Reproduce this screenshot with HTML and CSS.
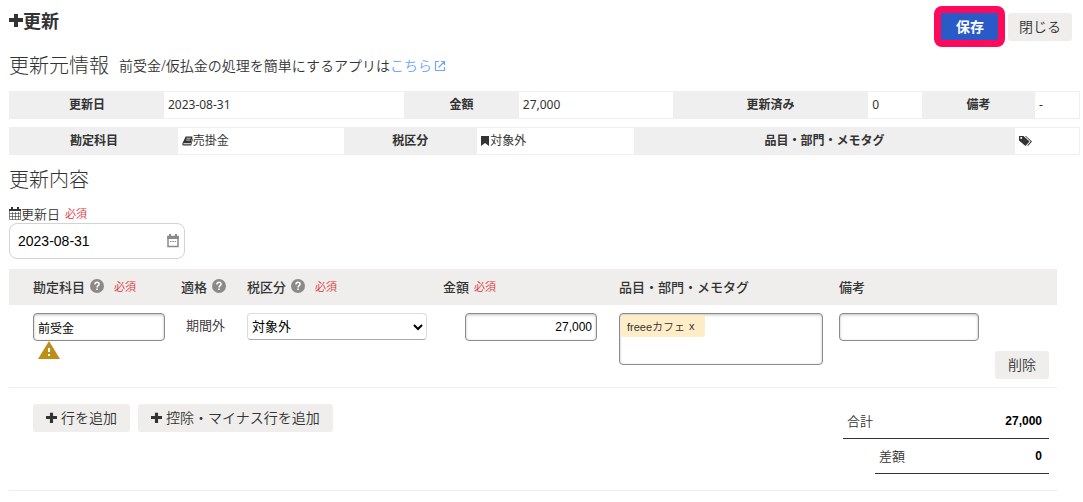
FILE: index.html
```html
<!DOCTYPE html>
<html lang="ja">
<head>
    <meta charset="UTF-8">
    <meta name="viewport" content="width=device-width, initial-scale=1.0">
    <title>更新</title>
    <link rel="stylesheet" href="styles.css">
</head>
<body>
    <svg class="symbols" aria-hidden="true">
        <symbol id="plus" viewBox="0 0 14 14">
            <path d="M5 1h4v4h5v4H9v5H5V9H0V5h5z"/>
        </symbol>
        <symbol id="help" viewBox="0 0 14 14">
            <circle cx="7" cy="7" r="7" fill="#8c8989"/>
            <path d="M4.900 5.400C4.900 4.100 5.800 3.300 7 3.300s2.100.8 2.100 1.900C9.100 6.600 7 6.700 7 8.500" fill="none" stroke="#fff" stroke-width="1.500"/>
            <path d="M6.200 9.600h1.600v1.500H6.200z" fill="#fff"/>
        </symbol>
    </svg>

    <header class="page-header">
        <h1><svg class="icon-title"><use href="#plus"/></svg>更新</h1>
        <div class="actions">
            <span class="highlight"><button type="submit" form="renewForm" class="btn btn-primary">保存</button></span>
            <button type="button" class="btn">閉じる</button>
        </div>
    </header>

    <div class="section-title">
        <h2>更新元情報</h2>
        <p>前受金/仮払金の処理を簡単にするアプリは<a href="#">こちら<svg class="icon-external" viewBox="0 0 12 12"><path d="M5 1.500H1.500v9h9V7M7 1.500h3.500V5M10.500 1.500L4.500 7.500" fill="none" stroke="currentColor" stroke-width="1.200"/></svg></a></p>
    </div>

    <table class="info">
        <colgroup>
            <col class="w155"><col class="w240"><col class="w114"><col class="w155"><col class="w196"><col class="w53"><col class="w113"><col>
        </colgroup>
        <tr>
            <th>更新日</th><td>2023-08-31</td>
            <th>金額</th><td>27,000</td>
            <th>更新済み</th><td>0</td>
            <th>備考</th><td>-</td>
        </tr>
    </table>

    <table class="info">
        <colgroup>
            <col class="w169"><col class="w165"><col class="w134"><col class="w157"><col class="w381"><col>
        </colgroup>
        <tr>
            <th>勘定科目</th>
            <td><svg class="icon-book" viewBox="0 0 12 12"><path d="M4 1h7.500L9.500 8.500H2.200q-1 0-.8 1h8L11.500 3l.5.500L10 11H1.500Q0 11 .3 9z"/><path d="M5 3h4.500M4.500 5H9" stroke="#fff" stroke-width=".8"/></svg>売掛金</td>
            <th>税区分</th>
            <td><svg class="icon-bookmark" viewBox="0 0 9 12"><path d="M0 1h8v10L4 8 0 11z"/></svg>対象外</td>
            <th>品目・部門・メモタグ</th>
            <td><svg class="icon-tags" viewBox="0 0 14 12"><path d="M0 1h4.500l6 5.500-4 4.500L0 5.500z"/><path d="M6 1h1l6 5.500L9 11l-.6-.7 3.300-3.800z"/><circle cx="2.200" cy="3" r="1" fill="#fff"/></svg></td>
        </tr>
    </table>

    <h2 class="content-title">更新内容</h2>

    <form id="renewForm">
        <div class="date-label">
            <svg class="icon-calendar" viewBox="0 0 12 13"><path d="M.5 2.500h11v10H.5zM.5 6.500h11M.5 9.500h11M3.500 5v7.500M6.500 5v7.500M9.500 5v7.500" fill="none" stroke="#333" stroke-width=".6"/><path d="M0 2h12v2H0zM2 0h2v3H2zM8 0h2v3H8z"/></svg><label for="renewDate">更新日</label>
            <span class="required">必須</span>
        </div>
        <div class="date-box">
            <input type="text" id="renewDate" name="renewDate" value="2023-08-31">
            <svg class="icon-picker" viewBox="0 0 12 14"><path d="M1 2.500h10v10H1z" fill="none" stroke="#8c8989" stroke-width="1.500"/><path d="M.3 2h11.400v3H.3zM2 0h2v3H2zM8 0h2v3H8zM3 7h1.500v1H3zM5.300 7h1.500v1H5.300zM7.600 7h1.500v1H7.600z" fill="#8c8989"/></svg>
        </div>

        <table class="lines">
            <colgroup>
                <col class="c-account"><col class="c-invoice"><col class="c-tax"><col class="c-amount"><col class="c-tags"><col class="c-note"><col>
            </colgroup>
            <thead>
                <tr>
                    <th><div class="head"><label for="account">勘定科目</label><svg class="icon-help"><use href="#help"/></svg><span class="required after-help">必須</span></div></th>
                    <th><div class="head">適格<svg class="icon-help"><use href="#help"/></svg></div></th>
                    <th><div class="head"><label for="tax">税区分</label><svg class="icon-help"><use href="#help"/></svg><span class="required after-help">必須</span></div></th>
                    <th><div class="head"><label for="amount">金額</label><span class="required">必須</span></div></th>
                    <th>品目・部門・メモタグ</th>
                    <th><label for="note">備考</label></th>
                    <th></th>
                </tr>
            </thead>
            <tbody>
                <tr>
                    <td>
                        <input type="text" id="account" class="field" value="前受金">
                        <svg class="icon-warning" viewBox="0 0 22 18"><path d="M11 0l11 18H0z" fill="#be8f17"/><path d="M10 7h2v4h-2zM10 13h2v2h-2z" fill="#fff"/></svg>
                    </td>
                    <td class="invoice">期間外</td>
                    <td>
                        <div class="select-box">
                            <select id="tax"><option>対象外</option></select>
                            <svg class="icon-arrow" viewBox="0 0 10 7"><path d="M1 1l4 4 4-4" fill="none" stroke="#000" stroke-width="2"/></svg>
                        </div>
                    </td>
                    <td class="amount"><input type="text" id="amount" class="field" value="27,000"></td>
                    <td>
                        <div class="tag-box"><span class="tag">freeeカフェ <button type="button">x</button></span></div>
                    </td>
                    <td><input type="text" id="note" class="field"></td>
                    <td class="delete"><button type="button" class="btn">削除</button></td>
                </tr>
            </tbody>
        </table>

        <div class="footer">
            <div class="add-buttons">
                <button type="button" class="btn"><svg class="icon-add"><use href="#plus"/></svg>行を追加</button>
                <button type="button" class="btn"><svg class="icon-add"><use href="#plus"/></svg>控除・マイナス行を追加</button>
            </div>
            <dl class="totals">
                <div class="total"><dt>合計</dt><dd>27,000</dd></div>
                <div class="total diff"><dt>差額</dt><dd>0</dd></div>
            </dl>
        </div>
    </form>
</body>
</html>
```
FILE: styles.css
```css
* {
    box-sizing: border-box;
}

body {
    margin: 0;
    padding: 6px 3px 0 9px;
    font-family: "Noto Sans", "Noto Sans CJK JP", sans-serif;
    font-size: 12px;
    font-weight: 350;
    color: #333;
    background: #fff;
}

svg {
    flex: none;
    fill: #333;
}

.symbols {
    display: none;
}

h1, h2, p {
    margin: 0;
}

h1 {
    display: flex;
    align-items: center;
    height: 30px;
    padding-bottom: 2px;
    font-size: 18px;
}

h2 {
    font-size: 20px;
    line-height: 28px;
    font-weight: 300;
}

a {
    color: #73a5ff;
    text-decoration: none;
}

input, select, button {
    font-family: "Liberation Sans", "Noto Sans CJK JP", sans-serif;
    font-size: 12px;
    color: #000;
}

/* buttons */

.btn {
    display: flex;
    align-items: center;
    height: 28px;
    padding: 0 11px 2px;
    border: 0;
    border-radius: 3px;
    background: #efeeed;
    color: #333;
    font-family: "Noto Sans", "Noto Sans CJK JP", sans-serif;
    font-size: 14px;
    font-weight: 350;
    white-space: nowrap;
    cursor: pointer;
}

.btn-primary {
    height: 27px;
    padding: 0 14px 2px 15px;
    border-radius: 1px;
    background: #285ac8;
    color: #fff;
    font-weight: bold;
}

.highlight {
    padding: 7px;
    border-radius: 8px;
    background: #ff0a5b;
}

/* header */

.page-header {
    display: flex;
    justify-content: space-between;
    height: 46px;
}

.actions {
    display: flex;
    align-items: center;
    gap: 3px;
    height: 41px;
    padding-right: 8px;
}

.icon-title {
    width: 14px;
    height: 14px;
}

.section-title {
    display: flex;
    align-items: center;
    gap: 10px;
    margin-bottom: 11px;
}

.section-title p {
    font-size: 14px;
    line-height: 28px;
}

.icon-external {
    width: 12px;
    height: 12px;
    margin-left: 2px;
    vertical-align: -1px;
}

/* source info */

.info {
    width: 100%;
    margin-bottom: 8px;
    border: 1px solid #efefef;
    border-spacing: 0;
    table-layout: fixed;
}

.info th, .info td {
    height: 26px;
    padding: 0 4px;
    line-height: 20px;
}

.info td {
    font-weight: 400;
}

.info th {
    background: #efefef;
}

.info svg {
    height: 12px;
    vertical-align: -2px;
}

.w155 { width: 14.4%; }
.w240 { width: 22.5%; }
.w114 { width: 10.7%; }
.w196 { width: 18.3%; }
.w53 { width: 5%; }
.w113 { width: 10.6%; }
.w169 { width: 15.7%; }
.w165 { width: 15.5%; }
.w134 { width: 12.5%; }
.w157 { width: 14.7%; }
.w381 { width: 35.6%; }

.icon-book { width: 11px; }
.icon-bookmark { width: 9px; }
.icon-tags { width: 14px; }

/* date */

.content-title {
    margin: 11px 0 9px;
}

.date-label {
    display: flex;
    align-items: center;
    height: 20px;
    font-size: 13px;
}

.icon-calendar {
    width: 12px;
    height: 13px;
}

.required {
    margin-left: 5px;
    color: #dc3237;
    font-size: 11px;
    font-weight: 350;
}

.date-box {
    position: relative;
    width: 176px;
    margin-bottom: 10px;
}

.date-box input {
    display: block;
    width: 100%;
    height: 36px;
    padding: 0 8px;
    border: 1px solid #d7d2d2;
    border-radius: 8px;
    font-size: 14px;
}

.icon-picker {
    position: absolute;
    top: 11px;
    right: 6px;
    width: 12px;
    height: 14px;
}

/* detail lines */

.lines {
    width: calc(100% - 23px);
    border-spacing: 0;
    border-bottom: 1px solid #efeeed;
    table-layout: fixed;
}

.c-account { width: 164px; }
.c-invoice { width: 66px; }
.c-tax { width: 196px; }
.c-amount { width: 176px; }
.c-tags { width: 220px; }
.c-note { width: 156px; }

.lines th {
    height: 36px;
    padding: 0 8px 2px;
    background: #efeeed;
    font-size: 13px;
    font-weight: 500;
    text-align: left;
}

.lines td {
    height: 82px;
    padding: 8px;
    vertical-align: top;
}

.lines th:first-child, .lines td:first-child {
    padding-left: 24px;
}

.head {
    display: flex;
    align-items: center;
}

.icon-help {
    width: 14px;
    height: 14px;
    margin-left: 5px;
}

.after-help {
    margin-left: 10px;
}

.field {
    display: block;
    width: 100%;
    height: 28px;
    padding: 0 4px;
    border: 1px solid #8c8989;
    border-radius: 4px;
    box-shadow: inset 0 1px 3px rgba(0, 0, 0, 0.25);
}

.icon-warning {
    display: block;
    width: 22px;
    height: 18px;
    margin-left: 5px;
}

.lines .invoice {
    padding-left: 13px;
    font-size: 13px;
    line-height: 24px;
}

.select-box {
    position: relative;
}

.select-box select {
    display: block;
    appearance: none;
    width: 100%;
    height: 27px;
    padding: 0 4px;
    border: 1px solid #e1dcdc;
    border-bottom-color: #aaa;
    border-radius: 4px;
    background: #fff;
    font-size: 13px;
}

.icon-arrow {
    position: absolute;
    top: 11px;
    right: 4px;
    width: 10px;
    height: 7px;
}

.lines .amount {
    padding-left: 30px;
    padding-right: 14px;
}

.amount input {
    text-align: right;
}

.tag-box {
    height: 52px;
    padding: 1px;
    border: 1px solid #8c8989;
    border-radius: 4px;
    box-shadow: inset 0 1px 3px rgba(0, 0, 0, 0.25);
}

.tag {
    display: flex;
    align-items: center;
    gap: 4px;
    width: 84px;
    height: 22px;
    padding-left: 6px;
    border-radius: 3px;
    background: #ffedc8;
    font-family: "Liberation Sans", "Noto Sans CJK JP", sans-serif;
    font-size: 11px;
}

.tag button {
    padding: 0;
    border: 0;
    background: none;
    color: #333;
    font-size: 11px;
}

.lines .delete {
    vertical-align: bottom;
}

.delete .btn {
    padding: 0 13px 2px;
}

/* footer */

.footer {
    display: flex;
    justify-content: space-between;
    width: calc(100% - 23px);
    height: 103px;
    padding: 16px 8px 0 24px;
    border-bottom: 1px solid #efeeed;
}

.add-buttons {
    display: flex;
    gap: 8px;
}

.add-buttons .btn {
    padding: 0 13px 2px;
}

.icon-add {
    width: 11px;
    height: 11px;
    margin-right: 4px;
}

.totals {
    width: 206px;
    margin: 0;
}

.total {
    display: flex;
    align-items: center;
    justify-content: space-between;
    height: 35px;
    padding: 0 7px 0 4px;
    border-bottom: 1px solid #333;
    font-size: 13px;
}

.total dt {
    padding-bottom: 2px;
}

.diff {
    margin-left: 32px;
}

.total dd {
    margin: 0;
    color: #000;
    font-family: "Liberation Sans", sans-serif;
    font-size: 12px;
    font-weight: bold;
}
```
